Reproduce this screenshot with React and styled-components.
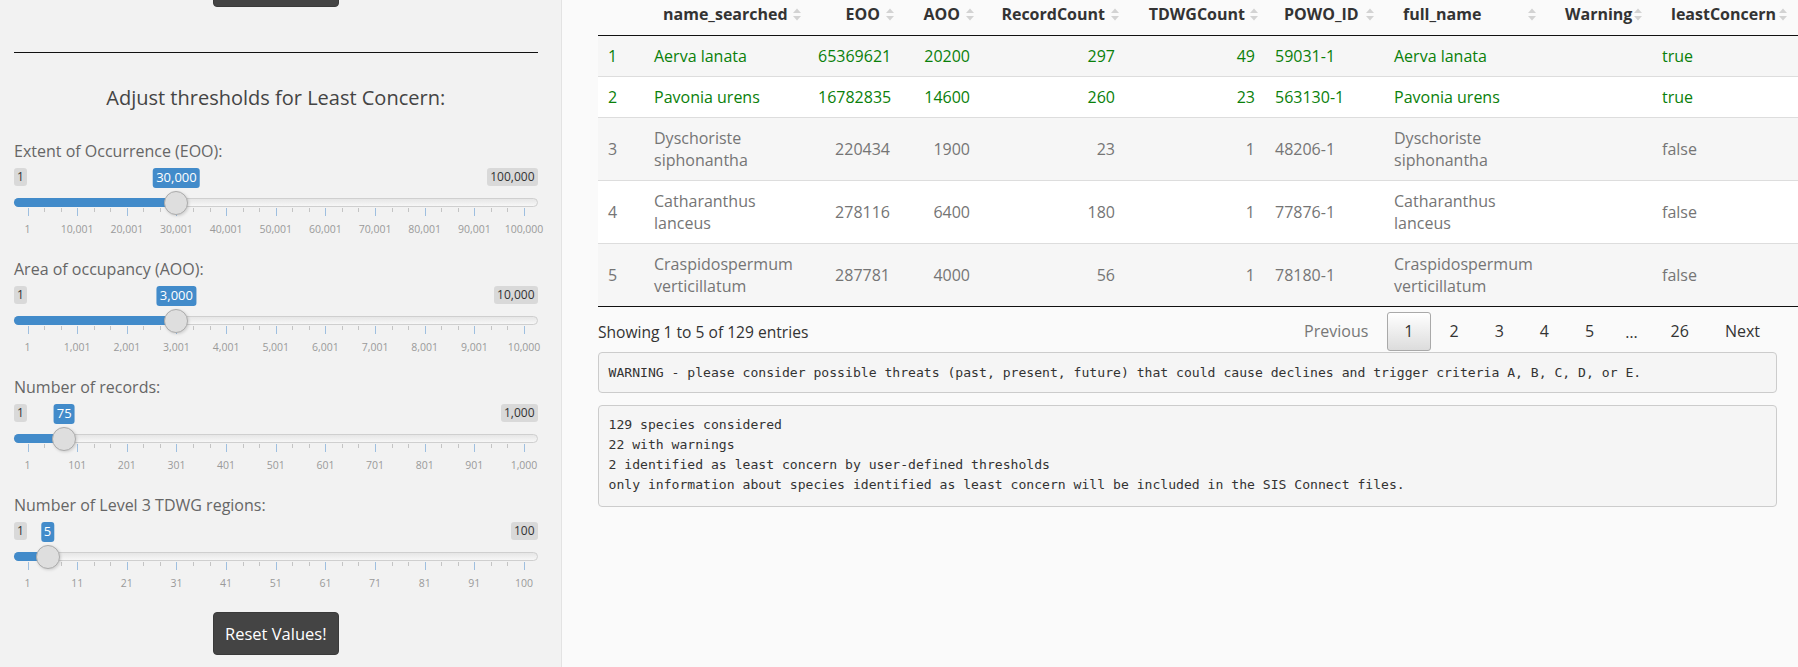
import React from 'react';
import styled, { createGlobalStyle } from 'styled-components';

const GlobalStyle = createGlobalStyle`
  html, body { margin: 0; padding: 0; background: #fafafa; overflow: hidden; }
  body { font-family: "Open Sans", "Noto Sans", sans-serif; color: #333; }
  * { box-sizing: border-box; }
`;

const Page = styled.div`
  display: grid;
  grid-template-columns: 562px 1fr;
  height: 667px;
`;

const Sidebar = styled.aside`
  background: #f2f2f2;
  border-right: 1px solid #e3e3e3;
  padding: 0 23.5px 0 14px;
  display: flex;
  flex-direction: column;
`;

const DarkButton = styled.button`
  align-self: center;
  width: 126px;
  height: 43px;
  background: #444;
  color: #fff;
  border: 1px solid #3a3a3a;
  border-radius: 4px;
  font-family: "Open Sans", sans-serif;
  font-size: 16.5px;
  margin-top: ${(p) => (p.$cut ? '-36px' : '0')};
  flex-shrink: 0;
`;

const Rule = styled.hr`
  margin: 45px 0 0;
  border: 0;
  border-top: 1px solid #111;
  width: 100%;
`;

const Title = styled.h4`
  margin: 32.5px 0 30px;
  text-align: center;
  font-weight: 400;
  font-size: 20px;
  line-height: 24px;
  color: #444;
`;

const FormGroup = styled.div`
  margin-bottom: 21.5px;
`;

const ControlLabel = styled.label`
  display: block;
  font-size: 16px;
  line-height: 23px;
  color: #666;
  margin-bottom: 5.5px;
`;

const Irs = styled.div`
  position: relative;
  height: 68px;
`;

const Chip = styled.span`
  position: absolute;
  top: 0;
  padding: 1px 3px;
  border-radius: 3px;
  font-size: ${(p) => (p.$value ? '13px' : '12px')};
  line-height: ${(p) => (p.$value ? '17.5px' : '16px')};
  color: ${(p) => (p.$value ? '#fff' : '#333')};
  background: ${(p) => (p.$value ? '#428bca' : 'rgba(0,0,0,0.1)')};
  white-space: nowrap;
  ${(p) => (p.$side === 'left' ? 'left: 0;' : '')}
  ${(p) => (p.$side === 'right' ? 'right: 0;' : '')}
  ${(p) => (p.$value ? 'transform: translateX(-50%);' : '')}
`;

const Line = styled.span`
  position: absolute;
  top: 30px;
  left: 0;
  right: 0;
  height: 9px;
  border: 1px solid #cfcfcf;
  border-radius: 8px;
  background: linear-gradient(to bottom, #dedede -50%, #fff 150%);
`;

const Bar = styled.span`
  position: absolute;
  top: 30px;
  left: 0;
  height: 9px;
  background: #428bca;
  border-radius: 8px 0 0 8px;
`;

const Handle = styled.span`
  position: absolute;
  top: 22.5px;
  width: 24px;
  height: 24px;
  margin-left: -12px;
  border-radius: 50%;
  border: 1px solid #ababab;
  background: #dedede;
  box-shadow: 1px 1px 3px rgba(0, 0, 0, 0.15);
  z-index: 2;
`;

const Tick = styled.span`
  position: absolute;
  top: 40px;
  width: 1px;
  height: ${(p) => (p.$major ? '8px' : '4px')};
  background: ${(p) => (p.$major ? '#9ebfe0' : '#c4c4c4')};
`;

const GridText = styled.span`
  position: absolute;
  top: 54px;
  transform: translateX(-50%);
  font-size: 10.5px;
  line-height: 14px;
  color: #9a9a9a;
  white-space: nowrap;
`;

const pos = (f) => `calc(13.5px + ${f} * (100% - 27px))`;

function Slider({ label, min, max, value, minText, maxText, valueText, grid }) {
  const frac = (value - min) / (max - min);
  const ticks = [];
  for (let i = 0; i <= 30; i++) {
    ticks.push(<Tick key={i} $major={i % 3 === 0} style={{ left: pos(i / 30) }} />);
  }
  return (
    <FormGroup>
      <ControlLabel>{label}</ControlLabel>
      <Irs>
        <Chip $side="left">{minText}</Chip>
        <Chip $side="right">{maxText}</Chip>
        <Chip $value style={{ left: pos(frac) }}>{valueText}</Chip>
        <Line />
        <Bar style={{ width: pos(frac) }} />
        <Handle style={{ left: pos(frac) }} />
        {ticks}
        {grid.map((g, i) => (
          <GridText key={g} style={{ left: pos(i / 10) }}>{g}</GridText>
        ))}
      </Irs>
    </FormGroup>
  );
}

const Main = styled.main`
  padding: 0 21px 0 36px;
  min-width: 0;
`;

const Table = styled.table`
  width: 1200px;
  table-layout: fixed;
  border-collapse: collapse;
  font-size: 16px;
  border-bottom: 1px solid #111;
`;

const Th = styled.th`
  position: relative;
  padding: 3px ${(p) => (p.$right ? '20px' : '10px')} 10px ${(p) => (p.$right ? '10px' : '19px')};
  text-align: ${(p) => (p.$right ? 'right' : 'left')};
  font-weight: 700;
  line-height: 22px;
  color: #333;
  border-bottom: 1px solid #111;
  white-space: nowrap;
`;

const SortIcon = styled.svg`
  position: absolute;
  top: 7.5px;
  width: 8px;
  height: 13px;
`;

const Tr = styled.tr`
  background: ${(p) => (p.$odd ? '#f6f6f6' : '#fff')};
  color: ${(p) => (p.$lc ? '#0a800a' : '#757575')};
`;

const Td = styled.td`
  padding: 9px 10px;
  line-height: 22px;
  text-align: ${(p) => (p.$right ? 'right' : 'left')};
  vertical-align: middle;
  border-top: ${(p) => (p.$first ? '0' : '1px solid #ddd')};
`;

const Footer = styled.div`
  display: flex;
  justify-content: space-between;
  align-items: center;
  padding-top: 5px;
`;

const Info = styled.div`
  font-size: 15.6px;
  color: #333;
`;

const Paginate = styled.div`
  display: flex;
  align-items: center;
`;

const PageBtn = styled.span`
  display: inline-block;
  padding: 8px 16px;
  margin-left: 2px;
  font-size: 16px;
  line-height: 21px;
  border: 1px solid ${(p) => (p.$current ? '#a9a9a9' : 'transparent')};
  border-radius: 3px;
  color: ${(p) => (p.$disabled ? '#777' : '#333')};
  background: ${(p) => (p.$current ? 'linear-gradient(to bottom, #fff 0%, #dcdcdc 100%)' : 'transparent')};
`;

const Ellipsis = styled.span`
  padding: 0 14px;
  font-size: 16px;
  color: #333;
`;

const Pre = styled.pre`
  margin: ${(p) => p.$mt} 0 0;
  padding: 9.5px 9.5px ${(p) => p.$pb || '9.5px'};
  background: #f5f5f5;
  border: 1px solid #ccc;
  border-radius: 4px;
  font-family: "DejaVu Sans Mono", "Liberation Mono", monospace;
  font-size: 13.1px;
  line-height: 19.8px;
  color: #333;
  white-space: pre;
  overflow: hidden;
`;

const columns = [
  { key: 'idx', label: '', w: 46 },
  { key: 'name', label: 'name_searched', w: 164, arrow: 7 },
  { key: 'eoo', label: 'EOO', w: 92, right: true, arrow: 6 },
  { key: 'aoo', label: 'AOO', w: 80, right: true, arrow: 6 },
  { key: 'rc', label: 'RecordCount', w: 145, right: true, arrow: 6 },
  { key: 'tc', label: 'TDWGCount', w: 140, right: true, arrow: 7 },
  { key: 'powo', label: 'POWO_ID', w: 119, arrow: 10 },
  { key: 'full', label: 'full_name', w: 162, arrow: 10 },
  { key: 'warn', label: 'Warning', w: 106, arrow: 10 },
  { key: 'lc', label: 'leastConcern', w: 146, arrow: 11 },
];

const rows = [
  { idx: '1', name: 'Aerva lanata', eoo: '65369621', aoo: '20200', rc: '297', tc: '49', powo: '59031-1', full: 'Aerva lanata', warn: '', lc: 'true' },
  { idx: '2', name: 'Pavonia urens', eoo: '16782835', aoo: '14600', rc: '260', tc: '23', powo: '563130-1', full: 'Pavonia urens', warn: '', lc: 'true' },
  { idx: '3', name: 'Dyschoriste siphonantha', eoo: '220434', aoo: '1900', rc: '23', tc: '1', powo: '48206-1', full: 'Dyschoriste siphonantha', warn: '', lc: 'false' },
  { idx: '4', name: 'Catharanthus lanceus', eoo: '278116', aoo: '6400', rc: '180', tc: '1', powo: '77876-1', full: 'Catharanthus lanceus', warn: '', lc: 'false' },
  { idx: '5', name: 'Craspidospermum verticillatum', eoo: '287781', aoo: '4000', rc: '56', tc: '1', powo: '78180-1', full: 'Craspidospermum verticillatum', warn: '', lc: 'false' },
];

const sliders = [
  { label: 'Extent of Occurrence (EOO):', min: 1, max: 100000, value: 30000, minText: '1', maxText: '100,000', valueText: '30,000', grid: ['1', '10,001', '20,001', '30,001', '40,001', '50,001', '60,001', '70,001', '80,001', '90,001', '100,000'] },
  { label: 'Area of occupancy (AOO):', min: 1, max: 10000, value: 3000, minText: '1', maxText: '10,000', valueText: '3,000', grid: ['1', '1,001', '2,001', '3,001', '4,001', '5,001', '6,001', '7,001', '8,001', '9,001', '10,000'] },
  { label: 'Number of records:', min: 1, max: 1000, value: 75, minText: '1', maxText: '1,000', valueText: '75', grid: ['1', '101', '201', '301', '401', '501', '601', '701', '801', '901', '1,000'] },
  { label: 'Number of Level 3 TDWG regions:', min: 1, max: 100, value: 5, minText: '1', maxText: '100', valueText: '5', grid: ['1', '11', '21', '31', '41', '51', '61', '71', '81', '91', '100'] },
];

function SortArrows({ right }) {
  return (
    <SortIcon viewBox="0 0 8 13" style={{ right }}>
      <polygon points="0,5 4,0.5 8,5" fill="#d3d3d3" />
      <polygon points="0,8 4,12.5 8,8" fill="#d3d3d3" />
    </SortIcon>
  );
}

export default function App() {
  return (
    <>
      <GlobalStyle />
      <Page>
        <Sidebar>
          <DarkButton $cut aria-label="Download" />
          <Rule />
          <Title>Adjust thresholds for Least Concern:</Title>
          {sliders.map((s) => (
            <Slider key={s.label} {...s} />
          ))}
          <DarkButton>Reset Values!</DarkButton>
        </Sidebar>
        <Main>
          <Table>
            <colgroup>
              {columns.map((c) => (
                <col key={c.key} style={{ width: c.w }} />
              ))}
            </colgroup>
            <thead>
              <tr>
                {columns.map((c) => (
                  <Th key={c.key} $right={c.right}>
                    {c.label}
                    {c.label && <SortArrows right={c.arrow} />}
                  </Th>
                ))}
              </tr>
            </thead>
            <tbody>
              {rows.map((r, i) => (
                <Tr key={r.idx} $odd={i % 2 === 0} $lc={r.lc === 'true'}>
                  {columns.map((c) => (
                    <Td key={c.key} $right={c.right} $first={i === 0}>{r[c.key]}</Td>
                  ))}
                </Tr>
              ))}
            </tbody>
          </Table>
          <Footer>
            <Info>Showing 1 to 5 of 129 entries</Info>
            <Paginate>
              <PageBtn $disabled>Previous</PageBtn>
              <PageBtn $current>1</PageBtn>
              <PageBtn>2</PageBtn>
              <PageBtn>3</PageBtn>
              <PageBtn>4</PageBtn>
              <PageBtn>5</PageBtn>
              <Ellipsis>…</Ellipsis>
              <PageBtn>26</PageBtn>
              <PageBtn>Next</PageBtn>
            </Paginate>
          </Footer>
          <Pre $mt="1px">WARNING - please consider possible threats (past, present, future) that could cause declines and trigger criteria A, B, C, D, or E.</Pre>
          <Pre $mt="12px" $pb="11.5px">{`129 species considered
22 with warnings
2 identified as least concern by user-defined thresholds
only information about species identified as least concern will be included in the SIS Connect files.`}</Pre>
        </Main>
      </Page>
    </>
  );
}
